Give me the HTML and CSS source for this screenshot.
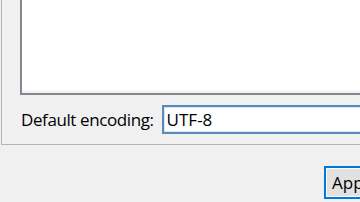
FILE: index.html
```html
<!DOCTYPE html>
<html lang="en">
<head>
    <meta charset="UTF-8">
    <title>Encoding</title>
    <link rel="stylesheet" href="styles.css">
</head>
<body>
    <div class="window">
        <div class="group">
            <div class="list"></div>
            <div class="row">
                <label class="label" for="enc">Default encoding:</label>
                <input class="input" id="enc" type="text" value="UTF-8">
            </div>
        </div>
        <div class="footer">
            <button class="btn btn-default">Apply</button>
        </div>
    </div>
</body>
</html>
```

FILE: styles.css
```css
* { margin: 0; padding: 0; box-sizing: border-box; }
html, body { width: 360px; height: 202px; overflow: hidden; }
body { font-family: "Open Sans", "Noto Sans", sans-serif; font-size: 17px; color: #000; background: #f0f0f0; }
.window { width: 420px; }
.group { margin-left: 1px; border-left: 1px solid #b4b4b4; border-bottom: 1px solid #b4b4b4; padding: 0 0 10px 18px; }
.list { height: 95px; background: #fff; border-left: 2px solid #828790; border-bottom: 2px solid #828790; box-shadow: inset 0 -3px 0 #f4f4f4; }
.row { display: flex; align-items: center; margin-top: 10px; gap: 8px; }
.label { flex: none; white-space: nowrap; padding-left: 1px; letter-spacing: -0.4px; }
.input { flex: 1; height: 29px; font: inherit; padding: 0 3px; border: 2px solid #5a8ab9; background: #fff; color: #000; outline: none; box-shadow: inset 0 0 0 1px #d6e5f3; }
.footer { display: flex; padding: 21px 0 0 324px; }
.btn { font: inherit; height: 33px; width: 112px; padding: 0 0 0 6px; text-align: left; background: #e1e1e1; border: 2px solid #0078d7; box-shadow: inset 0 0 0 1px #fff; color: #000; }
```
